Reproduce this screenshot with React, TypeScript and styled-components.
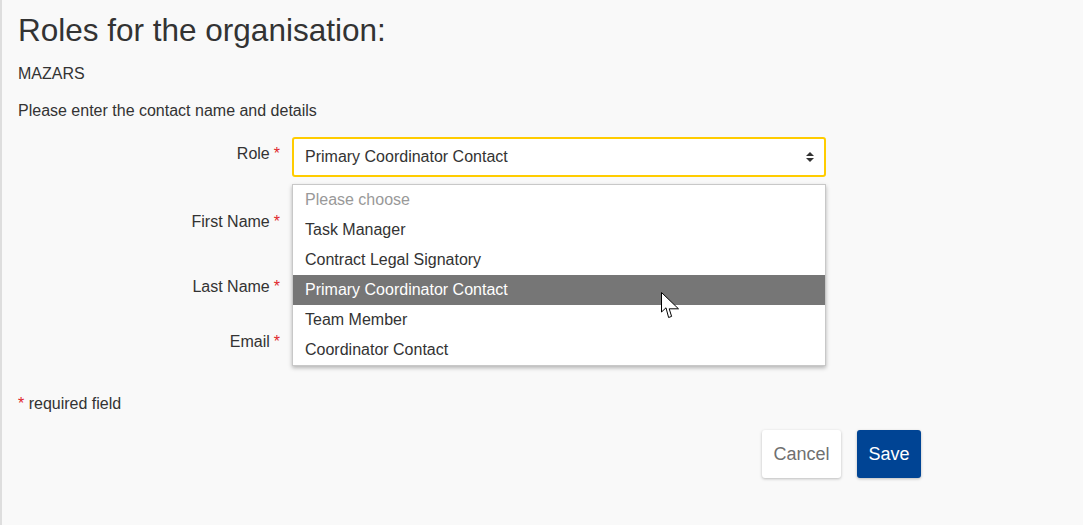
import React from "react";
import styled, { createGlobalStyle } from "styled-components";

const Global = createGlobalStyle`
  html, body { margin: 0; padding: 0; background: #f9f9f9; }
  body { font-family: "Liberation Sans", Arial, sans-serif; color: #333; }
  * { box-sizing: border-box; }
`;

const Page = styled.div`
  position: relative;
  min-height: 525px;
  border-left: 2px solid #dedede;
  padding: 12px 0 0 16px;
`;

const Title = styled.h1`
  margin: 0;
  font-size: 31.5px;
  line-height: 36px;
  font-weight: 400;
  color: #333;
`;

const Text = styled.p`
  margin: 0;
  font-size: 16px;
  line-height: 20px;
  color: #333;
`;

const Org = styled(Text)`
  margin-top: 16px;
`;

const Intro = styled(Text)`
  margin-top: 17px;
`;

const Form = styled.div`
  position: relative;
  margin-top: 16px;
  display: flex;
  flex-direction: column;
  width: 808px;
`;

const Row = styled.div<{ $mb: number }>`
  display: grid;
  grid-template-columns: 262px 534px;
  column-gap: 12px;
  margin-bottom: ${(p) => p.$mb}px;
`;

const Label = styled.label<{ $pt: number }>`
  text-align: right;
  font-size: 16px;
  line-height: 20px;
  padding-top: ${(p) => p.$pt}px;
  color: #333;
`;

const Star = styled.span<{ $gap?: number }>`
  color: #e0262b;
  margin-left: ${(p) => (p.$gap ?? 4)}px;
`;

const SelectBox = styled.div`
  height: 40px;
  border: 2px solid #ffcc00;
  border-radius: 3px;
  background: #fff;
  display: flex;
  align-items: center;
  justify-content: space-between;
  padding: 0 10px 0 11px;
  font-size: 16px;
  color: #333;
`;

const Input = styled.div`
  height: 40px;
  border: 1px solid #bbb;
  border-radius: 3px;
  background: #fff;
`;

const Dropdown = styled.ul`
  position: absolute;
  left: 274px;
  top: 47px;
  width: 534px;
  margin: 0;
  padding: 0;
  list-style: none;
  background: #fff;
  border: 1px solid #c8c8c8;
  box-shadow: 0 2px 4px rgba(0, 0, 0, 0.28);
`;

const Option = styled.li<{ $active?: boolean; $placeholder?: boolean }>`
  height: 30px;
  line-height: 30px;
  padding-left: 12px;
  font-size: 16px;
  background: ${(p) => (p.$active ? "#767676" : "transparent")};
  color: ${(p) => (p.$active ? "#fff" : p.$placeholder ? "#999" : "#333")};
`;

const Required = styled(Text)`
  margin-top: 37px;
`;

const ButtonRow = styled.div`
  display: flex;
  justify-content: flex-end;
  gap: 16px;
  width: 903px;
  margin-top: 16px;
`;

const Button = styled.button<{ $primary?: boolean }>`
  height: 48px;
  padding: 0 11.5px;
  border: none;
  border-radius: 3px;
  font-family: "Liberation Sans", Arial, sans-serif;
  font-size: 18px;
  background: ${(p) => (p.$primary ? "#004494" : "#fff")};
  color: ${(p) => (p.$primary ? "#fff" : "#707070")};
  box-shadow: 0 1px 3px rgba(0, 0, 0, 0.25);
`;

const Cursor = styled.svg`
  position: absolute;
  left: 658px;
  top: 291px;
`;

export default function App() {
  return (
    <>
      <Global />
      <Page>
        <Title>Roles for the organisation:</Title>
        <Org>MAZARS</Org>
        <Intro>Please enter the contact name and details</Intro>
        <Form>
          <Row $mb={20}>
            <Label $pt={7}>
              Role<Star>*</Star>
            </Label>
            <SelectBox>
              <span>Primary Coordinator Contact</span>
              <svg width="8" height="12" viewBox="0 0 8 12">
                <path d="M0 5 L4 1 L8 5 Z" fill="#333" />
                <path d="M0 7 L4 11 L8 7 Z" fill="#333" />
              </svg>
            </SelectBox>
          </Row>
          <Row $mb={25}>
            <Label $pt={15}>
              First Name<Star>*</Star>
            </Label>
            <Input />
          </Row>
          <Row $mb={15}>
            <Label $pt={15}>
              Last Name<Star>*</Star>
            </Label>
            <Input />
          </Row>
          <Row $mb={0}>
            <Label $pt={15}>
              Email<Star>*</Star>
            </Label>
            <Input />
          </Row>
          <Dropdown>
            <Option $placeholder>Please choose</Option>
            <Option>Task Manager</Option>
            <Option>Contract Legal Signatory</Option>
            <Option $active>Primary Coordinator Contact</Option>
            <Option>Team Member</Option>
            <Option>Coordinator Contact</Option>
          </Dropdown>
        </Form>
        <Required>
          <Star $gap={0}>*</Star> required field
        </Required>
        <ButtonRow>
          <Button>Cancel</Button>
          <Button $primary>Save</Button>
        </ButtonRow>
        <Cursor width="20" height="28" viewBox="0 0 20 28">
          <path
            d="M1.5 1.5 L1.5 21 L6 16.8 L8.6 26.5 L11.6 25.4 L9.2 17.8 L18.5 17.8 Z"
            fill="#fff"
            stroke="#000"
            strokeWidth="1"
            strokeLinejoin="miter"
          />
        </Cursor>
      </Page>
    </>
  );
}
